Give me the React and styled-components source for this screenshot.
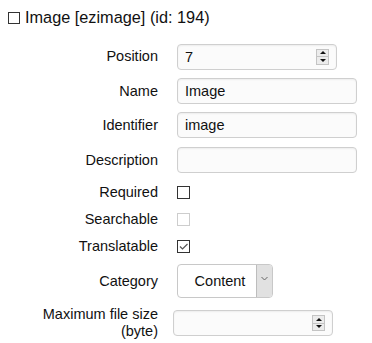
import React from 'react';
import styled, { createGlobalStyle } from 'styled-components';

const GlobalStyle = createGlobalStyle`
  body {
    margin: 0;
    background: #ffffff;
    font-family: 'Liberation Sans', Arial, sans-serif;
    color: #111;
  }
`;

const Page = styled.div`
  padding: 7px 0 0 8px;
  width: 372px;
  height: 343px;
  box-sizing: border-box;
`;

const Title = styled.h2`
  display: flex;
  align-items: center;
  gap: 5px;
  margin: 0;
  font-size: 16.3px;
  font-weight: normal;
  line-height: 20px;
  color: #111;
`;

const TitleBox = styled.span`
  width: 10px;
  height: 10px;
  border: 1px solid #333;
  margin-top: 1px;
`;

const Form = styled.div`
  display: flex;
  flex-direction: column;
  margin-top: 16px;
  padding-left: 22px;
`;

const Row = styled.div`
  display: flex;
  align-items: center;
  gap: ${(p) => p.$gap || 19}px;
  min-height: ${(p) => p.$h || 26}px;
  margin-top: ${(p) => p.$mt || 0}px;
`;

const Label = styled.label`
  width: 128px;
  flex: none;
  text-align: right;
  font-size: 14.5px;
  line-height: 17px;
  color: #111;
`;

const Input = styled.div`
  position: relative;
  box-sizing: border-box;
  width: ${(p) => p.$w}px;
  height: ${(p) => p.$h || 26}px;
  padding: 0 7px;
  display: flex;
  align-items: center;
  border: 1px solid #cfcfcf;
  border-radius: 4px;
  background: #fbfbfb;
  box-shadow: inset 0 1px 2px rgba(0, 0, 0, 0.06);
  font-size: 14.5px;
  color: #111;
`;

const Spinner = styled.span`
  position: absolute;
  right: 7px;
  top: 50%;
  transform: translateY(-50%);
  width: 13px;
  height: 16px;
  box-sizing: border-box;
  border: 1px solid #c4c4c4;
  background: #ececec;
  display: flex;
  flex-direction: column;
`;

const SpinHalf = styled.span`
  flex: 1;
  display: flex;
  align-items: center;
  justify-content: center;
  border-top: ${(p) => (p.$down ? '1px solid #c4c4c4' : 'none')};
  &::after {
    content: '';
    border-left: 3px solid transparent;
    border-right: 3px solid transparent;
    ${(p) => (p.$down ? 'border-top: 3px solid #111;' : 'border-bottom: 3px solid #111;')}
  }
`;

const Check = styled.span`
  box-sizing: border-box;
  width: 13px;
  height: 13px;
  border: 1px solid ${(p) => (p.$disabled ? '#cdcdcd' : '#333')};
  background: #fff;
  display: flex;
  align-items: center;
  justify-content: center;
`;

const Select = styled.div`
  box-sizing: border-box;
  width: 96px;
  height: 34px;
  display: flex;
  border: 1px solid #c8c8c8;
  border-radius: 4px;
  background: #fff;
  overflow: hidden;
`;

const SelectValue = styled.span`
  flex: 1;
  display: flex;
  align-items: center;
  justify-content: center;
  padding-left: 6px;
  font-size: 14.5px;
  color: #111;
`;

const SelectArrow = styled.span`
  width: 16px;
  display: flex;
  align-items: flex-start;
  justify-content: center;
  padding-top: 11px;
  box-sizing: border-box;
  background: #e1e1e1;
  border-left: 1px solid #bdbdbd;
`;

const NumberField = ({ w, value }) => (
  <Input $w={w}>
    {value}
    <Spinner>
      <SpinHalf />
      <SpinHalf $down />
    </Spinner>
  </Input>
);

export default function App() {
  return (
    <Page>
      <GlobalStyle />
      <Title>
        <TitleBox />
        Image [ezimage] (id: 194)
      </Title>
      <Form>
        <Row $h={27}>
          <Label>Position</Label>
          <NumberField w={160} value="7" />
        </Row>
        <Row $mt={8}>
          <Label>Name</Label>
          <Input $w={180}>Image</Input>
        </Row>
        <Row $mt={8}>
          <Label>Identifier</Label>
          <Input $w={180}>image</Input>
        </Row>
        <Row $mt={9}>
          <Label>Description</Label>
          <Input $w={180} />
        </Row>
        <Row $mt={6} $h={27}>
          <Label>Required</Label>
          <Check />
        </Row>
        <Row $h={27}>
          <Label>Searchable</Label>
          <Check $disabled />
        </Row>
        <Row $h={27}>
          <Label>Translatable</Label>
          <Check>
            <svg width="11" height="11" viewBox="0 0 11 11">
              <path d="M2 5.5 L4.5 8 L9.5 3" fill="none" stroke="#555" strokeWidth="1.2" />
            </svg>
          </Check>
        </Row>
        <Row $mt={4} $h={34}>
          <Label>Category</Label>
          <Select>
            <SelectValue>Content</SelectValue>
            <SelectArrow>
              <svg width="7" height="5" viewBox="0 0 7 5">
                <path d="M0.5 1 L3.5 4 L6.5 1" fill="none" stroke="#666" strokeWidth="1" />
              </svg>
            </SelectArrow>
          </Select>
        </Row>
        <Row $mt={8} $gap={15}>
          <Label>Maximum file size (byte)</Label>
          <NumberField w={160} />
        </Row>
      </Form>
    </Page>
  );
}
